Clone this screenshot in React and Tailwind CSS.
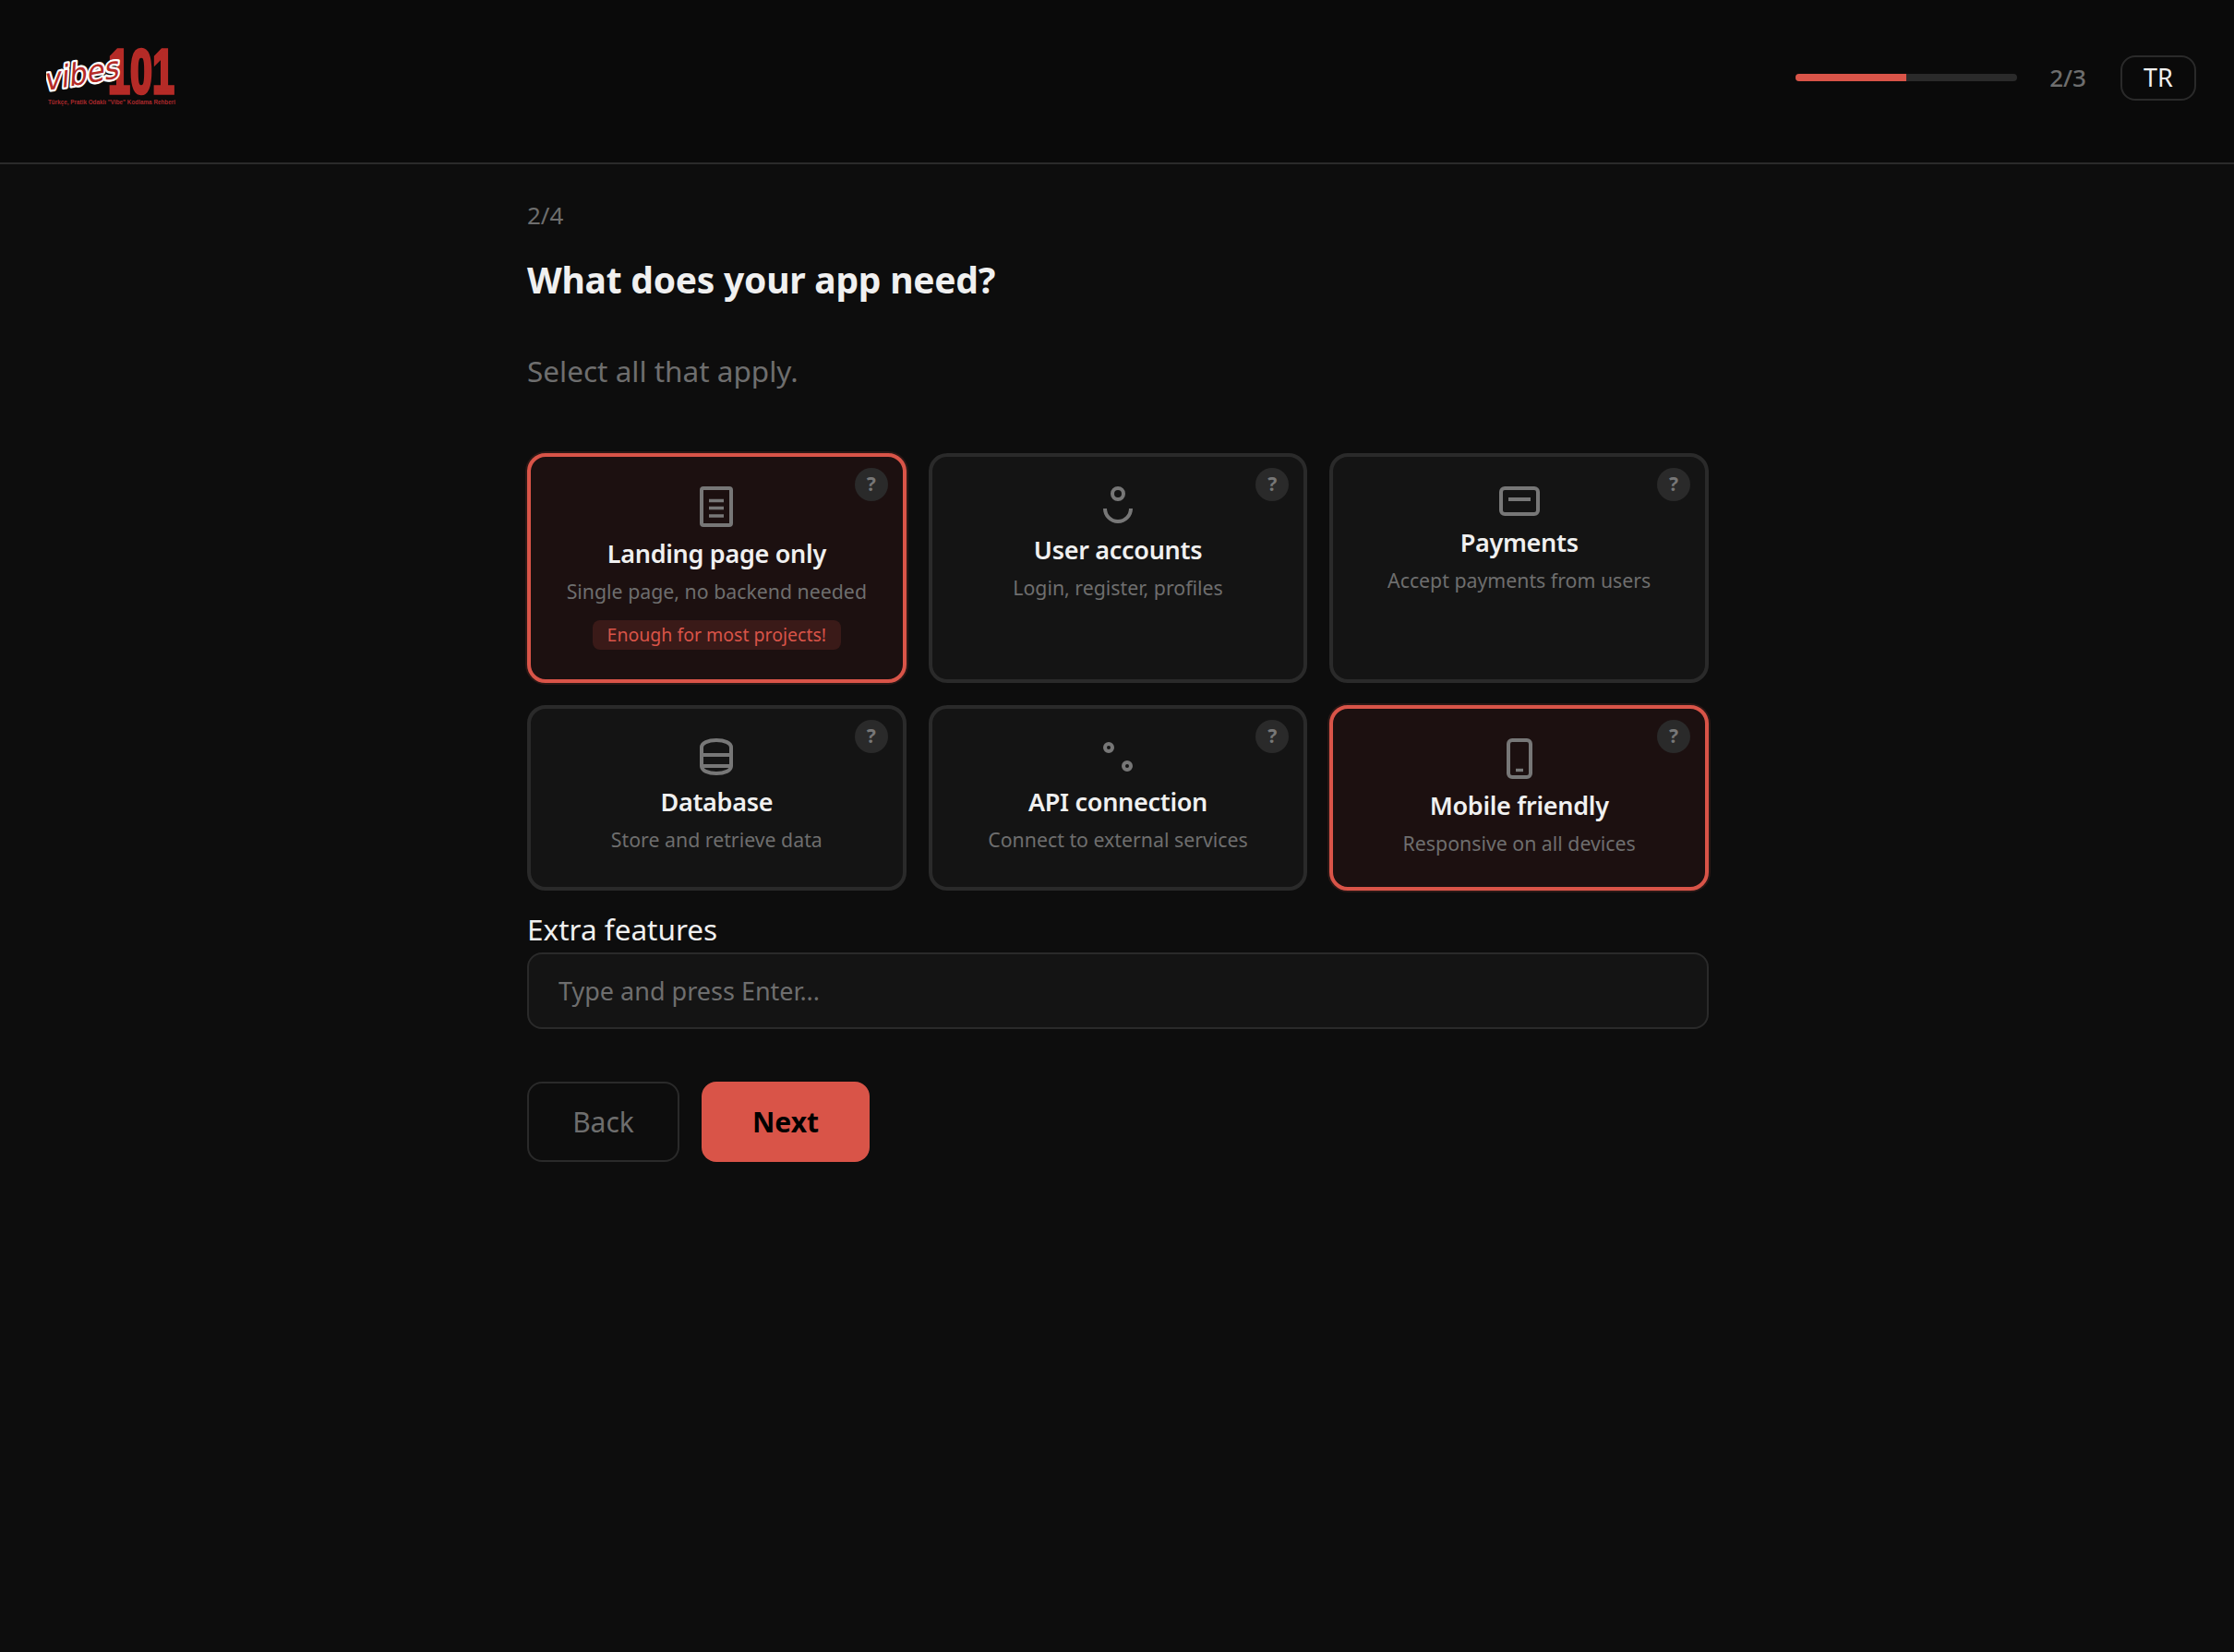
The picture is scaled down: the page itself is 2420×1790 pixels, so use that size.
import React from "react";

const FONT = "font-['Noto_Sans',sans-serif]";

function LandingIcon() {
  return (
    <svg width="36" height="44" viewBox="0 0 36 44" fill="none" stroke="#777777" strokeWidth="4">
      <rect x="2" y="2" width="32" height="40" rx="2" />
      <path d="M10 15.5h16M10 23.5h16M10 32h16" strokeWidth="3.4" />
    </svg>
  );
}

function UserIcon() {
  return (
    <svg width="32" height="40" viewBox="0 0 32 40" fill="none" stroke="#777777" strokeWidth="4">
      <circle cx="16" cy="8" r="6" />
      <path d="M2 24a14 14 0 0 0 28 0" />
    </svg>
  );
}

function CardIcon() {
  return (
    <svg width="44" height="32" viewBox="0 0 44 32" fill="none" stroke="#777777" strokeWidth="4">
      <rect x="2" y="2" width="40" height="28" rx="4" />
      <path d="M10 14h24" />
    </svg>
  );
}

function DatabaseIcon() {
  return (
    <svg width="36" height="40" viewBox="0 0 36 40" fill="none" stroke="#777777" strokeWidth="4">
      <path d="M2 10c0-5 7-8 16-8s16 3 16 8v20c0 5-7 8-16 8s-16-3-16-8z" />
      <path d="M2 18h32M2 30h32" />
    </svg>
  );
}

function ApiIcon() {
  return (
    <svg width="48" height="40" viewBox="0 0 48 40" fill="none" stroke="#777777" strokeWidth="4">
      <circle cx="14" cy="10" r="4" />
      <circle cx="34" cy="30" r="4" />
    </svg>
  );
}

function MobileIcon() {
  return (
    <svg width="28" height="44" viewBox="0 0 28 44" fill="none" stroke="#777777" strokeWidth="4">
      <rect x="2" y="2" width="24" height="40" rx="4" />
      <path d="M10 34.5h8" strokeWidth="3.4" />
    </svg>
  );
}

const options = [
  { title: "Landing page only", desc: "Single page, no backend needed", icon: <LandingIcon />, selected: true, badge: "Enough for most projects!" },
  { title: "User accounts", desc: "Login, register, profiles", icon: <UserIcon /> },
  { title: "Payments", desc: "Accept payments from users", icon: <CardIcon /> },
  { title: "Database", desc: "Store and retrieve data", icon: <DatabaseIcon /> },
  { title: "API connection", desc: "Connect to external services", icon: <ApiIcon /> },
  { title: "Mobile friendly", desc: "Responsive on all devices", icon: <MobileIcon />, selected: true },
];

function Logo() {
  return (
    <svg width="150" height="110" viewBox="0 -15 150 110" className="ml-[10px]">
      <text x="67" y="57" textLength="72" lengthAdjust="spacingAndGlyphs" fontFamily="Liberation Sans" fontWeight="700" fontSize="69" fill="#b52b27" stroke="#b52b27" strokeWidth="3.5">101</text>
      <text x="8" y="47" transform="rotate(-10 40 40) skewX(-14)" textLength="82" lengthAdjust="spacingAndGlyphs" fontFamily="DejaVu Sans" fontSize="33" fill="#b52b27" stroke="#ffffff" strokeWidth="4.5" paintOrder="stroke" strokeLinejoin="round">vibes</text>
      <text x="2" y="69" textLength="138" lengthAdjust="spacingAndGlyphs" fontFamily="Liberation Sans" fontWeight="700" fontSize="6.5" fill="#a8282a">Türkçe, Pratik Odaklı "Vibe" Kodlama Rehberi</text>
    </svg>
  );
}

function OptionCard({ title, desc, icon, selected, badge }) {
  return (
    <div className={`relative flex flex-col items-center rounded-[20px] border-4 p-[32px] text-center ${selected ? "border-[#d95448] bg-[#1c1010] shadow-[0_0_0_2px_rgba(217,84,72,0.15)]" : "border-[#2a2a2a] bg-[#141414]"}`}>
      <div className="absolute right-[16px] top-[12px] flex h-[36px] w-[36px] items-center justify-center rounded-full bg-[#2a2a2a] text-[21px] font-bold text-[#777777]">?</div>
      {icon}
      <div className="mt-[11px] text-[27px] font-semibold leading-[36px] tracking-[-0.3px] text-[#f0f0f0]">{title}</div>
      <div className="mt-[8px] text-[21.3px] leading-[30px] text-[#6e6e6e]">{desc}</div>
      {badge && (
        <div className="mt-[16px] rounded-[8px] bg-[#3a1a18] px-[16px] text-[19.5px] leading-[32px] text-[#d95448]">{badge}</div>
      )}
    </div>
  );
}

export default function App() {
  return (
    <div className={`min-h-screen bg-[#0d0d0d] ${FONT}`}>
      <header className="flex h-[178px] items-center justify-between border-b-2 border-[#2a2a2a] bg-[#0a0a0a] pb-[8px] pl-[40px] pr-[41px]">
        <Logo />
        <div className="flex items-center">
          <div className="h-[8px] w-[240px] overflow-hidden rounded-full bg-[#2a2a2a]">
            <div className="h-full w-1/2 bg-[#d95448]" />
          </div>
          <span className="ml-[35px] text-[26px] font-medium text-[#6e6e6e]">2/3</span>
          <button className="ml-[37px] h-[49px] w-[82px] rounded-[16px] border-2 border-[#2a2a2a] text-[27px] text-[#f0f0f0]">TR</button>
        </div>
      </header>

      <main className="mx-auto w-[1282px] pl-[2px] pt-[37px]">
        <div className="text-[26px] leading-[36px] text-[#6e6e6e]">2/4</div>
        <h1 className="mt-[26px] text-[39px] font-bold leading-[52px] tracking-[-0.25px] text-[#f0f0f0]">What does your app need?</h1>
        <p className="mt-[51px] mb-[67px] text-[31.5px] leading-[44px] text-[#6e6e6e]">Select all that apply.</p>

        <div className="grid grid-cols-3 gap-[24px]">
          {options.map((o) => (
            <OptionCard key={o.title} {...o} />
          ))}
        </div>

        <div className="mt-[24px] text-[31.5px] leading-[36px] text-[#f0f0f0]">Extra features</div>
        <input
          placeholder="Type and press Enter..."
          className="mt-[7px] h-[83px] w-full rounded-[16px] border-2 border-[#2a2a2a] bg-[#141414] px-[32px] text-[27px] text-[#f0f0f0] outline-none placeholder:text-[#6e6e6e]"
        />

        <div className="mt-[57px] flex gap-[24px]">
          <button className="h-[87px] w-[165px] rounded-[16px] border-2 border-[#2a2a2a] text-[30px] text-[#6e6e6e]">Back</button>
          <button className="h-[87px] w-[182px] rounded-[16px] bg-[#d95448] text-[30px] font-bold text-black">Next</button>
        </div>
      </main>
    </div>
  );
}
